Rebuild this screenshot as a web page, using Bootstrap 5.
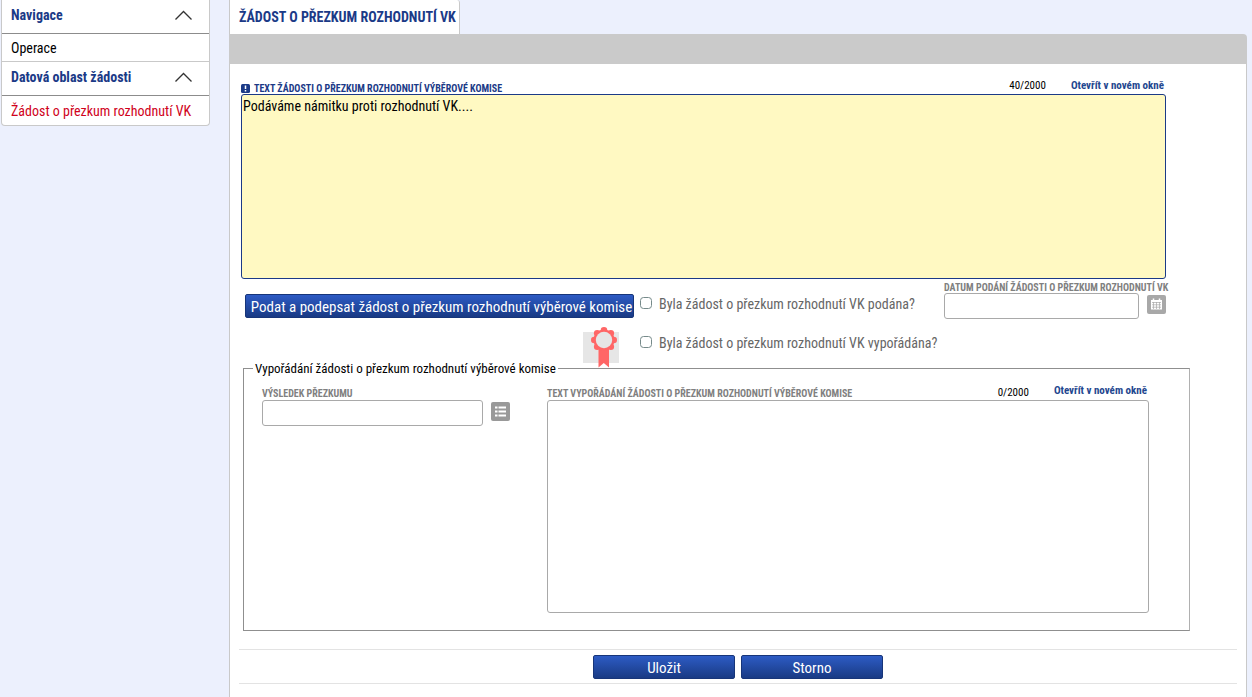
<!DOCTYPE html>
<html lang="cs">
<head>
<meta charset="utf-8">
<meta name="viewport" content="width=device-width, initial-scale=1">
<title>Žádost o přezkum rozhodnutí VK</title>
<link rel="stylesheet" href="https://cdn.jsdelivr.net/npm/bootstrap@5.3.0/dist/css/bootstrap.min.css">
<style>
  :root { --navy: #1b3a87; --line: #c9c9c9; --field: #a9a9a9; }
  body { background: #ecf0fd; color: #000; font-family: "Roboto Condensed", "Liberation Sans Narrow", Roboto, sans-serif; font-size: 14px; line-height: 20px; }
  .side-panel { width: 209px; margin-left: 1px; border: 1px solid var(--line); border-top: 0; border-radius: 0 0 4px 4px; }
  .side-head { height: 34px; padding: 0 16px 4px 9px; border: 0; border-bottom: 1px solid #8c8c8c; background: none; color: var(--navy); font-weight: 700; }
  .side-link { height: 27px; padding: 0 9px; color: #000; text-decoration: none; }
  .side-link + .side-head { border-top: 1px solid var(--line); height: 35px; }
  .side-link.current { color: #d0021b; height: 29px; }
  .page-main { margin: 0 5px 0 19px; min-width: 0; }
  .page-tab { height: 34px; padding: 0 3px 0 9px; border: 1px solid var(--line); border-width: 0 1px; border-radius: 0 3px 0 0; color: var(--navy); font-weight: 700; text-decoration: none; }
  .page-bar { height: 30px; background: #cacaca; border-radius: 0 4px 0 0; }
  .page-body { border: 1px solid var(--line); border-width: 0 1px; padding: 0 9px; }
  .request-area { padding: 0 71px 0 2px; }
  .label-row { height: 30px; }
  .reply-row { height: 31px; padding-bottom: 1px; }
  .cap { font-size: 10px; line-height: 10px; font-weight: 700; color: #808080; text-transform: uppercase; white-space: nowrap; }
  .cap.required { color: var(--navy); }
  .counter { font-size: 11px; line-height: 12px; margin-right: 25px; }
  .label-row .counter, .open-link { padding-bottom: 2px; }
  .open-link { font-size: 11px; line-height: 12px; font-weight: 700; color: #1f478f; text-decoration: none; padding-right: 2px; }
  .field { display: block; width: 100%; background: #fff; border: 1px solid var(--field); border-radius: 3px; padding: 1px; resize: none; color: #000; outline: 0; }
  .field.filled { height: 185px; background: #fff9c2; border-color: var(--navy); }
  .field.reply { height: 213px; }
  .field.one { height: 26px; }
  .btn-navy { height: 24px; padding: 0; border: 1px solid #173579; border-radius: 2px; background: linear-gradient(#2d5bc4, #193a84); color: #fff; font-size: 15px; line-height: 24px; white-space: nowrap; }
  .btn-wide { width: 142px; }
  .act-col { width: 389px; margin-left: 6px; padding-top: 15px; }
  .act-col .btn-navy { padding-left: 4px; }
  .seal { margin-right: 15px; }
  .check-col { padding: 15px 0 0 6px; width: 310px; color: #666; }
  .check-col input { flex: none; width: 12px; height: 12px; margin: 3px 7px 0 0; border-radius: 2px; border-color: #768a8a; }
  .check-col .tick-row { height: 20px; }
  .tick-row + .tick-row { margin-top: 19px; }
  .check-col label { white-space: nowrap; }
  .date-col { padding-top: 4px; }
  .date-field { width: 195px; }
  .icon-btn { width: 19px; height: 19px; margin-top: 2px; padding: 0; border: 0; border-radius: 2px; background: #a8a8a8; line-height: 0; }
  .icon-btn.list { background: #999; }
  .reply-set { margin: 0 47px 0 4px; border: 1px solid #8f8f8f; border-right-color: #b0b0b0; height: 263px; position: relative; }
  .reply-set legend { position: absolute; top: -10px; left: 9px; float: none; width: auto; margin: 0; padding: 0 2px; background: #fff; font-size: 13px; line-height: 20px; }
  .reply-grid { padding: 0 40px 0 18px; }
  .result-col { width: 285px; }
  .result-field { width: 221px; }
  .foot-bar { margin-top: 18px; height: 35px; gap: 6px; border: 1px solid #e3e3e3; border-width: 1px 0; }
</style>
</head>
<body>
<div class="d-flex min-vh-100 align-items-stretch">
  <aside class="flex-shrink-0">
    <nav class="side-panel bg-white d-flex flex-column" aria-label="Navigace">
      <button type="button" class="side-head d-flex align-items-center justify-content-between">Navigace
        <svg width="19" height="12" viewBox="0 0 19 12" fill="none" stroke="#333" stroke-width="1.3"><path d="M1.5 10.5l8-8 8 8"/></svg></button>
      <a href="#" class="side-link d-flex align-items-center">Operace</a>
      <button type="button" class="side-head d-flex align-items-center justify-content-between">Datová oblast žádosti
        <svg width="19" height="12" viewBox="0 0 19 12" fill="none" stroke="#333" stroke-width="1.3"><path d="M1.5 10.5l8-8 8 8"/></svg></button>
      <a href="#" class="side-link current d-flex align-items-center">Žádost o přezkum rozhodnutí VK</a>
    </nav>
  </aside>

  <main class="page-main flex-grow-1 d-flex flex-column">
    <div class="d-flex"><a href="#" class="page-tab bg-white d-flex align-items-center">ŽÁDOST O PŘEZKUM ROZHODNUTÍ VK</a></div>
    <div class="page-bar"></div>
    <form class="page-body bg-white flex-grow-1">
      <div class="request-area">
        <div class="label-row d-flex align-items-end">
          <label for="request" class="cap required d-flex align-items-start gap-1">
            <svg width="9" height="9" viewBox="0 0 9 9"><rect width="9" height="9" rx="1.5" fill="#1b3a87"/><path d="M4.500 1.500v3.500M4.500 6v1.500" stroke="#fff" stroke-width="1.500"/></svg>
            Text žádosti o přezkum rozhodnutí výběrové komise</label>
          <span class="counter ms-auto">40/2000</span>
          <a href="#" class="open-link">Otevřít v novém okně</a>
        </div>
        <textarea id="request" class="field filled">Podáváme námitku proti rozhodnutí VK....</textarea>
      </div>

      <div class="d-flex">
        <div class="act-col flex-shrink-0 d-flex flex-column">
          <button type="button" class="btn-navy w-100">Podat a podepsat žádost o přezkum rozhodnutí výběrové komise</button>
          <svg class="seal align-self-end mt-2" width="36" height="42" viewBox="0 0 36 42">
            <rect y="6" width="36" height="31" fill="#e6e6e6"/>
            <path d="M15.500 23h10.500v18.500l-5.200-4.500-5.300 4.500z" fill="#ff6666"/>
            <g fill="#ff6666"><circle cx="21" cy="14" r="10.500"/><circle cx="21" cy="4.300" r="3.300"/><circle cx="27.800" cy="7.200" r="3.300"/><circle cx="30.700" cy="14" r="3.300"/><circle cx="27.800" cy="20.800" r="3.300"/><circle cx="14.200" cy="7.200" r="3.300"/><circle cx="11.300" cy="14" r="3.300"/><circle cx="14.200" cy="20.800" r="3.300"/></g>
            <circle cx="21" cy="14" r="8.200" fill="#e6e6e6"/>
          </svg>
        </div>
        <div class="check-col flex-shrink-0">
          <div class="tick-row d-flex"><input type="checkbox" class="form-check-input" id="filed"><label for="filed">Byla žádost o přezkum rozhodnutí VK podána?</label></div>
          <div class="tick-row d-flex"><input type="checkbox" class="form-check-input" id="settled"><label for="settled">Byla žádost o přezkum rozhodnutí VK vypořádána?</label></div>
        </div>
        <div class="date-col">
          <label for="date" class="cap d-block">Datum podání žádosti o přezkum rozhodnutí VK</label>
          <div class="d-flex align-items-start gap-2">
            <input type="text" id="date" class="field one date-field">
            <button type="button" class="icon-btn" aria-label="Kalendář"><svg width="19" height="19" viewBox="0 0 19 19"><path d="M4 5h11v9.500H4z" fill="#fff"/><path d="M6.500 3.500v2.500M12.500 3.500v2.500" stroke="#fff" stroke-width="1.500"/><path d="M5 7.500h9M5 9.800h9M5 12.200h9M6.500 7v7M9.500 7v7M12.500 7v7" stroke="#a8a8a8" stroke-width=".7"/></svg></button>
          </div>
        </div>
      </div>

      <fieldset class="reply-set">
        <legend>Vypořádání žádosti o přezkum rozhodnutí výběrové komise</legend>
        <div class="reply-grid d-flex">
          <div class="result-col flex-shrink-0">
            <div class="reply-row d-flex align-items-end"><label for="result" class="cap">Výsledek přezkumu</label></div>
            <div class="d-flex align-items-start gap-2">
              <input type="text" id="result" class="field one result-field">
              <button type="button" class="icon-btn list" aria-label="Seznam"><svg width="19" height="19" viewBox="0 0 19 19"><path d="M4 5.500h2.500M7.500 5.500h7.500M4 9.500h2.500M7.500 9.500h7.500M4 13.500h2.500M7.500 13.500h7.500" stroke="#fff" stroke-width="2"/></svg></button>
            </div>
          </div>
          <div class="flex-grow-1">
            <div class="reply-row d-flex align-items-end">
              <label for="reply" class="cap">Text vypořádání žádosti o přezkum rozhodnutí výběrové komise</label>
              <span class="counter ms-auto">0/2000</span>
              <a href="#" class="open-link">Otevřít v novém okně</a>
            </div>
            <textarea id="reply" class="field reply"></textarea>
          </div>
        </div>
      </fieldset>

      <div class="foot-bar d-flex justify-content-center align-items-center">
        <button type="submit" class="btn-navy btn-wide">Uložit</button>
        <button type="button" class="btn-navy btn-wide">Storno</button>
      </div>
    </form>
  </main>
</div>
<script src="https://cdn.jsdelivr.net/npm/bootstrap@5.3.0/dist/js/bootstrap.bundle.min.js"></script>
</body>
</html>
